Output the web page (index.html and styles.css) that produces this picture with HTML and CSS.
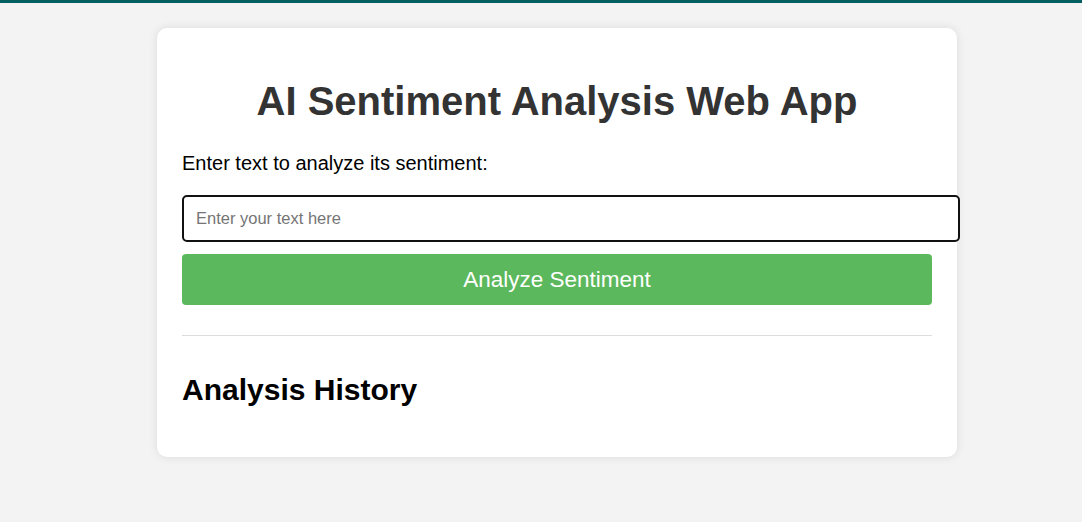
FILE: index.html
```html
<!DOCTYPE html>
<html lang="en">
<head>
<meta charset="utf-8">
<title>AI Sentiment Analysis Web App</title>
<link rel="stylesheet" href="styles.css">
</head>
<body>
<div class="container">
  <h1 class="title">AI Sentiment Analysis Web App</h1>
  <label class="label" for="text">Enter text to analyze its sentiment:</label>
  <input class="text-input" id="text" type="text" placeholder="Enter your text here">
  <button class="analyze-btn" type="button">Analyze Sentiment</button>
  <hr class="divider">
  <h2 class="history-title">Analysis History</h2>
  <div class="history"></div>
</div>
</body>
</html>
```
FILE: styles.css
```css
html, body {
  margin: 0;
  padding: 0;
}
body {
  background: #f3f3f3;
  border-top: 3px solid #045f63;
  font-family: "Liberation Sans", Arial, sans-serif;
  padding: 25px 0 0 32px;
  min-height: 100vh;
  box-sizing: border-box;
}
.container {
  width: 800px;
  margin: 0 auto;
  background: #fff;
  border-radius: 10px;
  box-shadow: 0 0 10px rgba(0, 0, 0, 0.1);
  padding: 25px;
  box-sizing: border-box;
}
.title {
  text-align: center;
  color: #333;
  font-size: 40px;
  margin: 26px 0 0;
}
.label {
  display: block;
  font-size: 20px;
  line-height: 23px;
  color: #000;
  margin: 28px 0 20px;
}
.text-input {
  display: block;
  width: 100%;
  padding: 12px;
  font-size: 16.5px;
  line-height: 19px;
  font-family: "Liberation Sans", Arial, sans-serif;
  border: 2px solid #111;
  border-radius: 5px;
  margin: 0 0 12px;
}
.text-input::placeholder {
  color: #757575;
}
.analyze-btn {
  display: block;
  width: 100%;
  height: 51px;
  background: #5cb85c;
  color: #fff;
  border: none;
  border-radius: 4px;
  font-size: 22.5px;
  font-family: "Liberation Sans", Arial, sans-serif;
  cursor: pointer;
}
.divider {
  border: none;
  border-top: 1px solid #ddd;
  margin: 30px 0 0;
}
.history-title {
  font-size: 30px;
  line-height: 34px;
  margin: 37px 0 25px;
  color: #000;
}
```
